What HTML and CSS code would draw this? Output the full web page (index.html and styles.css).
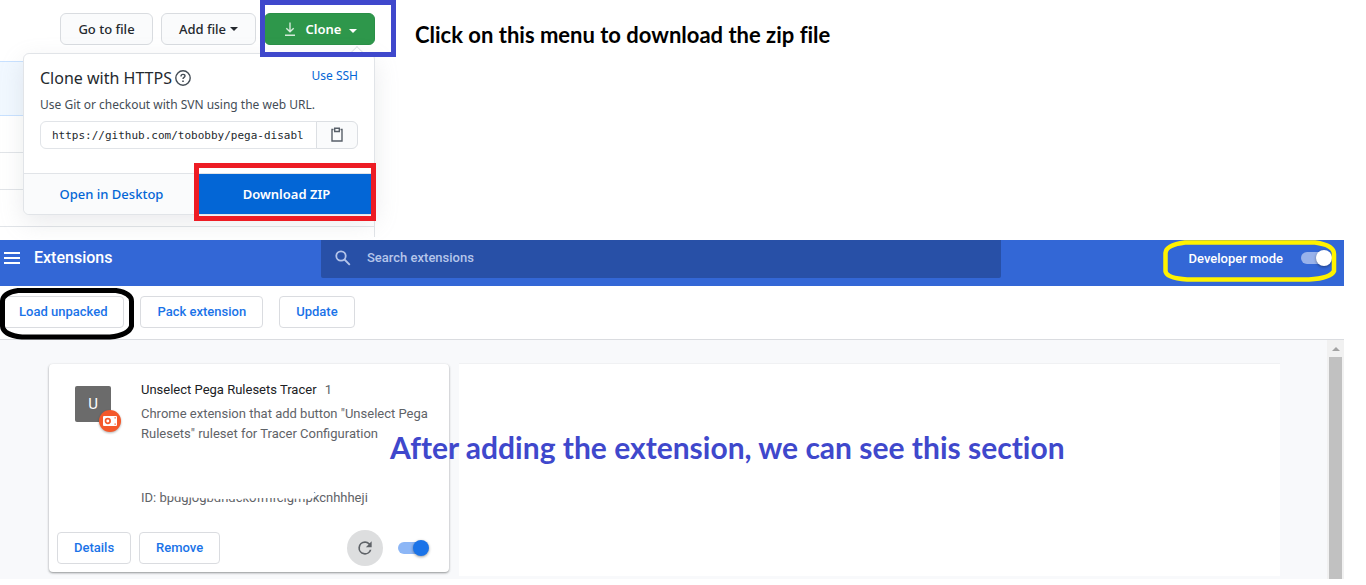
FILE: index.html
```html
<!DOCTYPE html>
<html lang="en">
<head>
<meta charset="utf-8">
<title>Installing the extension</title>
<link rel="stylesheet" href="styles.css">
</head>
<body>
<section class="repo">
  <div class="repo-bar">
    <button class="btn" type="button">Go to file</button>
    <button class="btn btn-add" type="button">Add file<span class="caret"></span></button>
    <div class="clone-wrap">
      <button class="btn btn-clone" type="button">
        <svg width="16" height="16" viewBox="0 0 16 16" fill="none" stroke="currentColor" stroke-width="1.4"><path d="M8 1.5v9M4.3 7.2 8 10.8l3.7-3.6M3 14.2h10"/></svg>
        Clone<span class="caret"></span>
      </button>
      <span class="mark mark-blue"></span>
    </div>
    <h2 class="note">Click on this menu to download the zip file</h2>
  </div>
  <div class="files">
    <div class="file-head"></div>
    <div class="file-row"></div>
    <div class="file-row"></div>
    <div class="file-row"></div>
    <div class="file-end"></div>
    <div class="popover">
      <span class="pointer"></span>
      <div class="pop-body">
        <div class="pop-head">
          <h3 class="pop-title">Clone with HTTPS
            <svg width="16" height="16" viewBox="0 0 16 16" fill="none" stroke="#444d56" stroke-width="1.4"><circle cx="8" cy="8" r="7.2"/><path d="M6 6.4C6 5 6.900 4.400 8 4.400s2 .7 2 1.700c0 1.300-2 1.400-2 2.900"/><path d="M8 10.400v1.500" stroke-width="1.600"/></svg>
          </h3>
          <a class="ssh" href="#ssh">Use SSH</a>
        </div>
        <p class="pop-text">Use Git or checkout with SVN using the web URL.</p>
        <div class="url">
          <input class="url-input" type="text" aria-label="Repository URL" value="https://github.com/tobobby/pega-disabl" readonly>
          <button class="copy" type="button" aria-label="Copy URL">
            <svg width="14" height="16" viewBox="0 0 14 16" fill="none" stroke="#586069" stroke-width="1.400"><path d="M3.500 2.500h-1.500v11.500h10V2.500h-1.500"/><path d="M4.700 1.200h4.600v3.300H4.700z"/></svg>
          </button>
        </div>
      </div>
      <div class="pop-foot">
        <a class="foot-link" href="#desktop">Open in Desktop</a>
        <div class="zip-wrap">
          <a class="zip" href="#zip">Download ZIP</a>
          <span class="mark mark-red"></span>
        </div>
      </div>
    </div>
  </div>
</section>

<section class="ext">
  <header class="ext-bar">
    <div class="brand">
      <button class="menu" type="button" aria-label="Main menu"><span></span><span></span><span></span></button>
      <h1 class="ext-title">Extensions</h1>
    </div>
    <label class="search">
      <svg width="16" height="16" viewBox="0 0 16 16" fill="none" stroke="#b5c5ea" stroke-width="1.800"><circle cx="6" cy="6" r="4.700"/><path d="m9.500 9.500 5.300 5.300"/></svg>
      <input class="search-input" type="text" placeholder="Search extensions" aria-label="Search extensions">
    </label>
    <div class="dev">
      <label for="dev">Developer mode</label>
      <input class="toggle toggle-light" id="dev" type="checkbox" checked>
      <svg class="ring ring-yellow" viewBox="0 0 174 42" fill="none" stroke="#fff200" stroke-width="4.500"><path d="M22 2.500H152Q171 5 171 14V31Q168 38 146 39.500H24Q3 38 2.500 31V13Q3 5 22 2.500Z"/></svg>
    </div>
  </header>
  <div class="actions">
    <div class="load-wrap">
      <button class="cbtn" type="button">Load unpacked</button>
      <svg class="ring ring-black" viewBox="0 0 134 52" fill="none" stroke="#000" stroke-width="5"><path d="M18 2.500H116Q132 5 131.500 14V38Q129 47 110 49H22Q3 47 2.500 38V14Q2 5 18 2.500Z"/></svg>
    </div>
    <button class="cbtn" type="button">Pack extension</button>
    <button class="cbtn" type="button">Update</button>
  </div>
  <div class="ext-main">
    <div class="cards">
      <article class="card">
        <div class="card-body">
          <div class="avatar">U
            <svg class="badge" width="24" height="24" viewBox="0 0 24 24"><circle cx="12" cy="12" r="11" fill="#f4592b"/><rect x="5" y="7" width="14" height="10" rx="1" fill="#fff"/><circle cx="9.800" cy="12" r="2.300" fill="none" stroke="#f4592b" stroke-width="1.700"/><path d="M16.500 8.200h1.300v1.300h-1.300zM16.500 14.500h1.300v1.300h-1.300z" fill="#f4592b"/></svg>
          </div>
          <div class="info">
            <h2 class="name">Unselect Pega Rulesets Tracer <span class="version">1</span></h2>
            <p class="desc">Chrome extension that add button "Unselect Pega Rulesets" ruleset for Tracer Configuration</p>
            <p class="id">ID: bpdgjogbdndckofmfclgmpkcnhhheji
              <svg class="smudge" viewBox="0 0 160 12" fill="#fff"><path d="M7 0H152L156 3 154 7 146 8 132 7.500 116 7 100 7 78 8 60 8 40 7 22 6 7 5Z"/></svg>
            </p>
          </div>
        </div>
        <div class="card-foot">
          <button class="cbtn" type="button">Details</button>
          <button class="cbtn" type="button">Remove</button>
          <button class="reload" type="button" aria-label="Reload">
            <svg width="20" height="20" viewBox="0 0 24 24" fill="#5f6368"><path d="M17.650 6.350A7.958 7.958 0 0 0 12 4a8 8 0 1 0 7.730 10h-2.080A6 6 0 1 1 12 6c1.660 0 3.140.69 4.220 1.780L13 11h7V4z"/></svg>
          </button>
          <input class="toggle" type="checkbox" aria-label="Enabled" checked>
        </div>
      </article>
      <div class="blank"></div>
      <p class="caption">After adding the extension, we can see this section</p>
    </div>
    <div class="scroll"><span class="scroll-up"></span><span class="thumb"></span></div>
  </div>
</section>
</body>
</html>
```
FILE: styles.css
```css
* { box-sizing: border-box; }
body { margin: 0; background: #fff; color: #24292e; font-family: "Noto Sans", "Open Sans", sans-serif; }
h1, h2, h3, p { margin: 0; }
button, input { font: inherit; margin: 0; }
a { text-decoration: none; color: #0366d6; }
svg { flex: none; }

/* Repository panel */
.repo { height: 240px; overflow: hidden; }
.repo-bar { display: flex; gap: 8px; padding: 13px 0 16px 60px; }
.btn { display: flex; align-items: center; justify-content: center; height: 32px; min-width: 93px; padding: 0 15px; border: 1px solid #d9dce0; border-radius: 6px; background: #fafbfc; color: #24292e; font-size: 13px; font-weight: 500; white-space: nowrap; }
.btn-add { min-width: 95px; }
.caret { margin-left: 4px; border: 4px solid transparent; border-top-color: currentColor; border-bottom: 0; }
.clone-wrap { position: relative; }
.btn-clone { min-width: 111px; gap: 8px; padding: 0 12px; border-color: #2a8f47; background: #2e974b; color: #fff; font-weight: 600; }
.btn-clone svg { opacity: .8; }
.btn-clone .caret { margin: 3px 0 0; }
.mark { position: absolute; pointer-events: none; border: 5px solid; }
.mark-blue { inset: -13px -21px -12px -4px; border-color: #3f48cc; z-index: 3; }
.note { padding: 12px 0 0 32px; color: #000; font: 700 22px/20px Lato, sans-serif; font-variant-ligatures: none; white-space: nowrap; }

.files { position: relative; width: 375px; border-right: 1px solid #e1e4e8; }
.file-head { height: 55px; background: #f1f8ff; border: solid #c8e1ff; border-width: 1px 0; }
.file-row { height: 37px; border-bottom: 1px solid #e1e4e8; }
.file-end { height: 10px; }
.popover { position: absolute; top: -8px; left: 23px; width: 352px; border: 1px solid #e1e4e8; border-radius: 6px; background: #fff; box-shadow: 0 8px 24px rgba(149, 157, 165, .2); }
.pointer { position: absolute; top: -6px; right: 12px; width: 10px; height: 10px; border: solid #e1e4e8; border-width: 1px 0 0 1px; background: #fff; transform: rotate(45deg); }
.pop-body { padding: 12px 16px 24px; }
.pop-head { display: flex; justify-content: space-between; }
.pop-title { display: flex; align-items: center; gap: 3px; font-size: 16px; line-height: 24px; font-weight: 400; }
.ssh { font-size: 12px; line-height: 20px; }
.pop-text { padding: 4px 0 6px; font-size: 12px; line-height: 21px; color: #444d56; white-space: nowrap; }
.url { display: flex; }
.url-input { flex: 1; min-width: 0; height: 28px; padding: 0 11px; border: 1px solid #e1e4e8; border-radius: 6px 0 0 6px; background: #fff; color: #24292e; font: 11px "DejaVu Sans Mono", monospace; }
.copy { display: flex; align-items: center; justify-content: center; width: 42px; margin-left: -1px; padding: 0; border: 1px solid #dcdfe3; border-radius: 0 6px 6px 0; background: #fafbfc; }
.pop-foot { display: flex; border-top: 1px solid #e1e4e8; border-radius: 0 0 6px 6px; background: #fafbfc; font-size: 13px; line-height: 40px; font-weight: 600; text-align: center; }
.foot-link { flex: 1; font-weight: 500; }
.zip-wrap { position: relative; flex: 1; }
.zip { display: block; background: #0366d6; color: #fff; }
.mark-red { inset: -11px -2px -7px -5px; border-color: #ed1c24; }

/* Extensions page */
.ext { margin-right: 22px; font-family: Roboto, sans-serif; font-size: 13px; }
.ext-bar { display: grid; grid-template-columns: 321px minmax(0, 680px) 1fr; height: 46px; background: #3367d6; color: #fff; }
.brand { display: flex; align-items: center; gap: 14px; height: 36px; padding-left: 4px; }
.menu { display: grid; gap: 3px; width: 16px; padding: 0; border: 0; background: none; }
.menu span { height: 2px; background: #fff; }
.ext-title { font-size: 16px; line-height: 36px; font-weight: 500; }
.search { display: flex; align-items: center; gap: 16px; height: 38px; padding: 0 14px 3px; border-radius: 0 0 2px 2px; background: #2850a7; }
.search-input { flex: 1; min-width: 0; padding: 0; border: 0; outline: 0; background: none; color: #fff; }
.search-input::placeholder { color: #b5c5ea; font-weight: 500; }
.dev { position: relative; display: flex; align-items: center; justify-content: flex-end; gap: 18px; height: 36px; padding-right: 11px; font-weight: 500; }
.ring { position: absolute; pointer-events: none; overflow: visible; }
.ring-yellow { top: 0; right: 7px; width: 174px; height: 42px; }
.toggle { position: relative; appearance: none; width: 32px; height: 16px; }
.toggle::before { content: ""; position: absolute; top: 2px; left: 0; width: 28px; height: 12px; border-radius: 6px; background: #8cb6f6; }
.toggle::after { content: ""; position: absolute; top: 0; right: 1px; width: 16px; height: 16px; border-radius: 50%; background: #1a73e8; box-shadow: 0 1px 3px rgba(0, 0, 0, .4); }
.toggle-light::before { background: #98b2eb; }
.toggle-light::after { background: #fff; }

.actions { display: flex; gap: 16px; padding: 10px 2px 11px; border-bottom: 1px solid #dadce0; }
.load-wrap { position: relative; }
.ring-black { top: -8px; left: -2px; width: 134px; height: 52px; }
.cbtn { height: 32px; padding: 0 16px 2px; border: 1px solid #dadce0; border-radius: 4px; background: #fff; color: #1a73e8; font-weight: 500; white-space: nowrap; }
.ext-main { display: flex; background: #f8f9fb; }
.cards { position: relative; flex: 1; display: flex; gap: 10px; padding: 24px 47px 3px 49px; }
.card { display: flex; flex-direction: column; flex: none; width: 400px; height: 208px; margin-bottom: 4px; border-radius: 4px; background: #fff; box-shadow: 0 1px 2px rgba(60, 64, 67, .4), 0 1px 3px rgba(60, 64, 67, .2); }
.card-body { display: flex; gap: 30px; flex: 1; padding: 16px 16px 0 26px; color: #5f6368; line-height: 20px; }
.avatar { position: relative; flex: none; width: 36px; height: 36px; margin-top: 6px; border-radius: 2px; background: #6b6b6b; color: #fff; font-size: 15px; line-height: 36px; text-align: center; }
.badge { position: absolute; top: 23px; left: 23px; filter: drop-shadow(0 1px 1px rgba(0, 0, 0, .3)); }
.name { margin-bottom: 4px; color: #202124; font-size: 13px; font-weight: 400; }
.version { margin-left: 5px; color: #5f6368; }
.id { position: relative; margin-top: 44px; white-space: nowrap; }
.smudge { position: absolute; top: 3px; left: 19px; width: 160px; height: 12px; }
.card-foot { display: flex; align-items: center; gap: 8px; padding: 0 19px 6px 8px; }
.reload { display: flex; align-items: center; justify-content: center; width: 36px; height: 36px; margin: 0 7px 0 auto; padding: 0; border: 0; border-radius: 50%; background: #dddedf; }
.blank { flex: 1; background: #fff; box-shadow: 0 -1px 0 #f0f1f3; }
.caption { position: absolute; top: 89px; left: 390px; color: #3f48cc; font: 700 30px/36px Lato, sans-serif; font-variant-ligatures: none; white-space: nowrap; }
.scroll { display: flex; flex-direction: column; align-items: center; width: 17px; background: #f1f1f1; }
.scroll-up { margin: 7px 0 6px; border: 4px solid transparent; border-top: 0; border-bottom-color: #a3a3a3; }
.thumb { flex: 1; width: 13px; background: #c1c1c1; }
```
